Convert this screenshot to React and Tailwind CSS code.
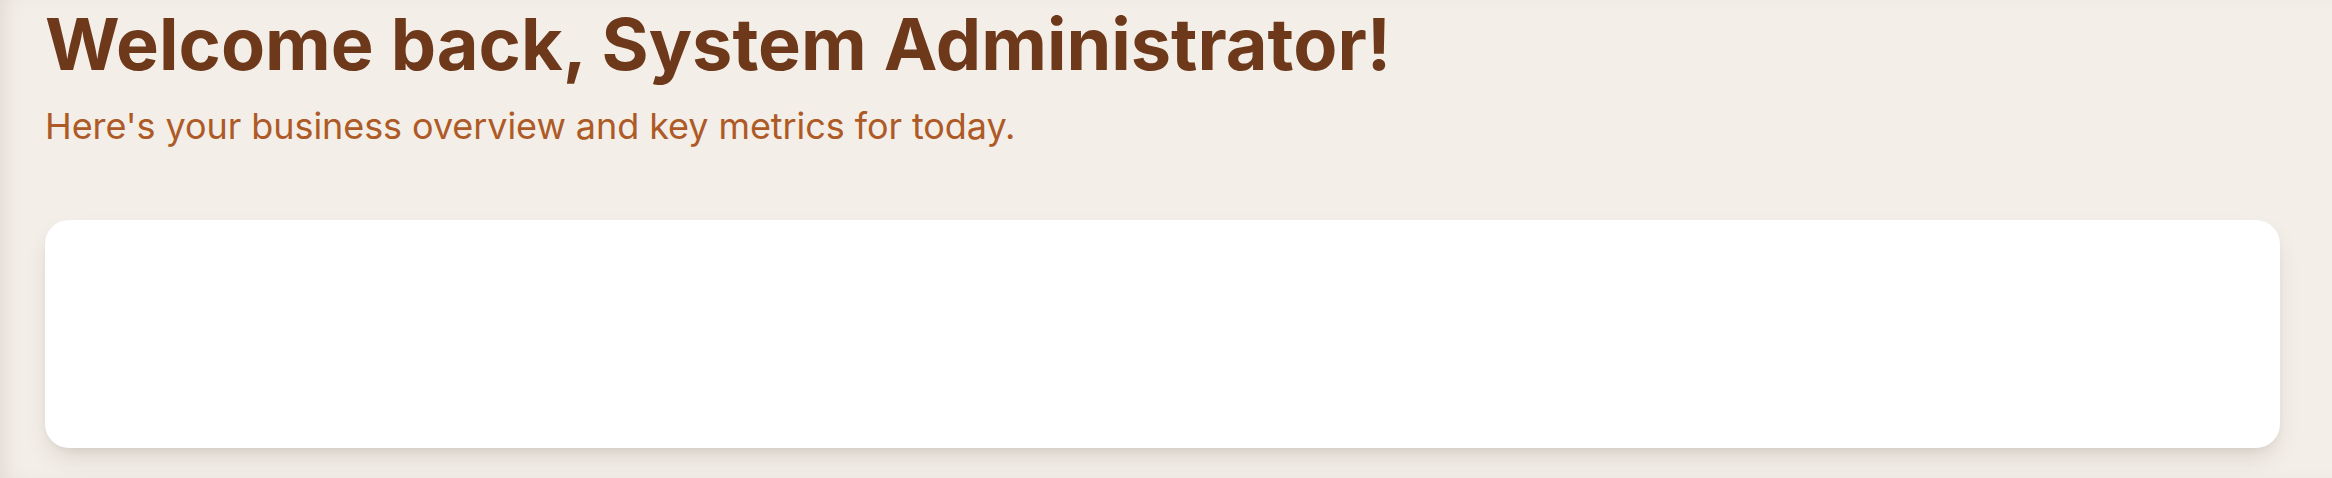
export default function App() {
  return (
    <div
      className="min-h-[478px] w-full bg-[#f3eee8] shadow-[inset_14px_0_22px_-12px_rgba(60,40,20,0.12)]"
      style={{ fontFamily: "Inter, 'Noto Sans', sans-serif" }}
    >
      <div className="pl-[45px] pr-[52px] pt-[8px] pb-[30px]">
        <h1 className="text-[72px] leading-[72px] font-bold text-[#6e391b]">
          Welcome back, System Administrator!
        </h1>
        <p className="mt-[19px] text-[36px] leading-[54px] tracking-[-0.002em] text-[#ad5a26]">
          Here's your business overview and key metrics for today.
        </p>
        <div className="mt-[67px] h-[228px] rounded-[24px] bg-white shadow-[0_12px_24px_-6px_rgba(80,60,40,0.18),0_4px_8px_-4px_rgba(80,60,40,0.08)]" />
      </div>
    </div>
  );
}
